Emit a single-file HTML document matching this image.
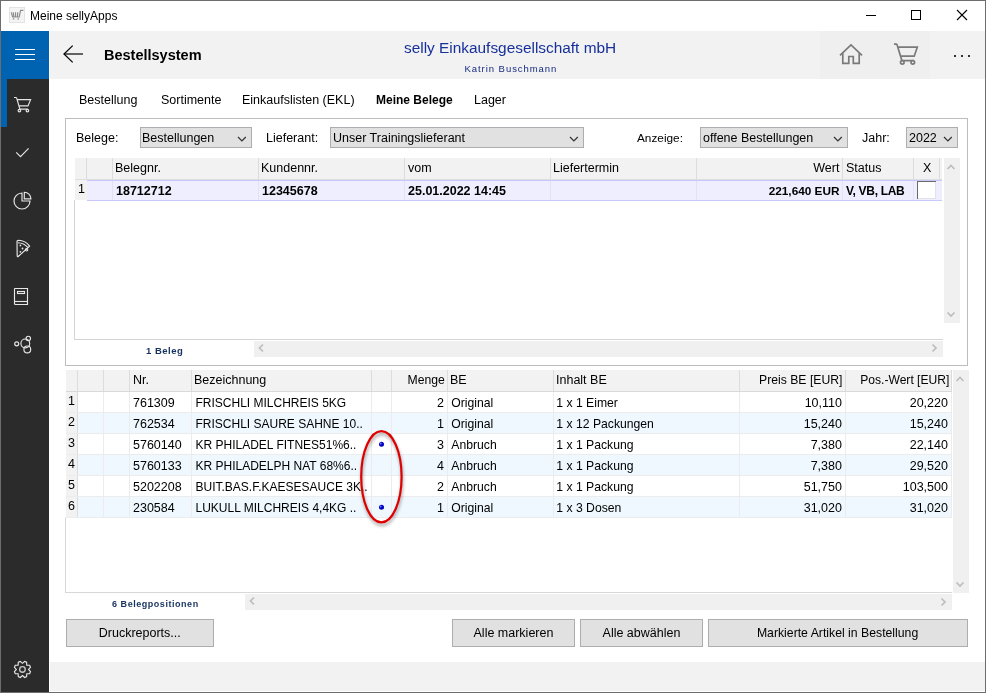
<!DOCTYPE html>
<html><head><meta charset="utf-8"><style>
html,body{margin:0;padding:0;background:#fff;}
#root{position:relative;will-change:transform;width:986px;height:693px;overflow:hidden;font-family:"Liberation Sans", sans-serif;}
#root>div,#root>svg{position:absolute;box-sizing:content-box;}
.t{white-space:pre;}
</style></head><body><div id="root">
<div style='left:0px;top:0px;width:986px;height:693px;background:#ffffff;'></div>
<div style='left:0px;top:0px;width:986px;height:1px;background:#6d6d6d;'></div>
<div style='left:0px;top:692px;width:986px;height:1px;background:#6d6d6d;'></div>
<div style='left:0px;top:0px;width:1px;height:693px;background:#6d6d6d;'></div>
<div style='left:985px;top:0px;width:1px;height:693px;background:#6d6d6d;'></div>
<div style='left:9px;top:7px;width:14px;height:14px;border:1px solid #e3e3e3;background:#f4f4f4;'></div>
<svg style='left:10px;top:8px;' width='15' height='14' viewBox='0 0 15 14'><g fill='none' stroke='#8c8c8c' stroke-width='1.2'><path d='M1.3 4.4 L2.6 9 L9.2 9 L10.6 2.4 L13.4 2.4'/><path d='M3.3 4.2 L3.8 9 M5.5 4.2 L5.6 9 M7.7 4.2 L7.5 9'/></g><path d='M2.5 11.5 L3.6 9.8 L4.7 11.5 Z M7.1 11.5 L8.2 9.8 L9.3 11.5 Z' fill='#8c8c8c'/></svg>
<div class='t' style='left:30.00px;top:10px;font-size:12px;line-height:12px;font-weight:400;color:#000;'>Meine sellyApps</div>
<div style='left:866px;top:15px;width:10px;height:1px;background:#000;'></div>
<div style='left:911px;top:10px;width:8px;height:8px;border:1px solid #000;background:transparent;'></div>
<svg style='left:956px;top:9px;' width='12' height='12' viewBox='0 0 12 12'><path d='M1 1 L11 11 M11 1 L1 11' stroke='#000' stroke-width='1.1' fill='none'/></svg>
<div style='left:1px;top:31px;width:48px;height:661px;background:#2b2b2b;'></div>
<div style='left:1px;top:31px;width:48px;height:48px;background:#0063b1;'></div>
<div style='left:49px;top:31px;width:1px;height:48px;background:#fbfbfb;'></div>
<div style='left:15px;top:49px;width:20px;height:1px;background:#ffffff;'></div>
<div style='left:15px;top:54px;width:20px;height:1px;background:#ffffff;'></div>
<div style='left:15px;top:59px;width:20px;height:1px;background:#ffffff;'></div>
<div style='left:1px;top:79px;width:6px;height:48px;background:#0063b1;'></div>
<div style='left:50px;top:31px;width:935px;height:48px;background:#f2f2f2;'></div>
<div style='left:820px;top:31px;width:110px;height:48px;background:#efefef;'></div>
<svg style='left:62px;top:44px;' width='22' height='20' viewBox='0 0 22 20'><path d='M21 10 L2.5 10' stroke='#333' stroke-width='1.5' fill='none'/><path d='M10.7 1.6 L2 10 L10.7 18.4' stroke='#0a0a0a' stroke-width='1.3' fill='none'/></svg>
<div class='t' style='left:104.00px;top:48px;font-size:14.5px;line-height:14.5px;font-weight:700;color:#000;'>Bestellsystem</div>
<div class='t' style='left:404.00px;top:40px;font-size:15.4px;line-height:15.4px;font-weight:400;color:#17309a;'>selly Einkaufsgesellschaft mbH</div>
<div class='t' style='left:464.50px;top:64px;font-size:9.5px;line-height:9.5px;font-weight:400;color:#152a80;letter-spacing:0.95px;'>Katrin Buschmann</div>
<div style='left:50px;top:662px;width:935px;height:29px;background:#f2f2f2;'></div>
<div class='t' style='left:79.00px;top:94px;font-size:12.5px;line-height:12.5px;font-weight:400;color:#000;'>Bestellung</div>
<div class='t' style='left:161.00px;top:94px;font-size:12.5px;line-height:12.5px;font-weight:400;color:#000;'>Sortimente</div>
<div class='t' style='left:242.00px;top:94px;font-size:12.5px;line-height:12.5px;font-weight:400;color:#000;'>Einkaufslisten (EKL)</div>
<div class='t' style='left:376.00px;top:94px;font-size:12px;line-height:12px;font-weight:700;color:#000;'>Meine Belege</div>
<div class='t' style='left:474.00px;top:94px;font-size:12.5px;line-height:12.5px;font-weight:400;color:#000;'>Lager</div>
<div style='left:65px;top:118px;width:901px;height:246px;border:1px solid #bdbdbd;background:transparent;'></div>
<div class='t' style='left:76.00px;top:132px;font-size:12.5px;line-height:12.5px;font-weight:400;color:#000;'>Belege:</div>
<div style='left:140px;top:127px;width:110px;height:19px;border:1px solid #acadb0;background:#e1e1e1;'></div>
<div class='t' style='left:142.00px;top:132px;font-size:12.5px;line-height:12.5px;font-weight:400;color:#000;'>Bestellungen</div>
<svg style='left:237px;top:136px;' width='10' height='7' viewBox='0 0 10 7'><path d='M1 1 L4.9 4.9 L8.8 1' stroke='#333' stroke-width='1.25' fill='none'/></svg>
<div class='t' style='left:266.00px;top:132px;font-size:12.5px;line-height:12.5px;font-weight:400;color:#000;'>Lieferant:</div>
<div style='left:330px;top:127px;width:252px;height:19px;border:1px solid #acadb0;background:#e1e1e1;'></div>
<div class='t' style='left:333.00px;top:132px;font-size:12.5px;line-height:12.5px;font-weight:400;color:#000;'>Unser Trainingslieferant</div>
<svg style='left:569px;top:136px;' width='10' height='7' viewBox='0 0 10 7'><path d='M1 1 L4.9 4.9 L8.8 1' stroke='#333' stroke-width='1.25' fill='none'/></svg>
<div class='t' style='left:637.00px;top:133px;font-size:11.8px;line-height:11.8px;font-weight:400;color:#000;'>Anzeige:</div>
<div style='left:700px;top:127px;width:146px;height:19px;border:1px solid #acadb0;background:#e1e1e1;'></div>
<div class='t' style='left:703.00px;top:132px;font-size:12.5px;line-height:12.5px;font-weight:400;color:#000;'>offene Bestellungen</div>
<svg style='left:833px;top:136px;' width='10' height='7' viewBox='0 0 10 7'><path d='M1 1 L4.9 4.9 L8.8 1' stroke='#333' stroke-width='1.25' fill='none'/></svg>
<div class='t' style='left:862.00px;top:132px;font-size:12.5px;line-height:12.5px;font-weight:400;color:#000;'>Jahr:</div>
<div style='left:906px;top:127px;width:50px;height:19px;border:1px solid #acadb0;background:#e1e1e1;'></div>
<div class='t' style='left:909.00px;top:132px;font-size:12.5px;line-height:12.5px;font-weight:400;color:#000;'>2022</div>
<svg style='left:943px;top:136px;' width='10' height='7' viewBox='0 0 10 7'><path d='M1 1 L4.9 4.9 L8.8 1' stroke='#333' stroke-width='1.25' fill='none'/></svg>
<div style='left:75px;top:158px;width:867px;height:22px;background:#f2f2f2;'></div>
<div style='left:75px;top:179px;width:867px;height:1px;background:#dedede;'></div>
<div style='left:86px;top:158px;width:1px;height:21px;background:#dcdcdc;'></div>
<div style='left:112px;top:158px;width:1px;height:21px;background:#dcdcdc;'></div>
<div style='left:258px;top:158px;width:1px;height:21px;background:#dcdcdc;'></div>
<div style='left:404px;top:158px;width:1px;height:21px;background:#dcdcdc;'></div>
<div style='left:550px;top:158px;width:1px;height:21px;background:#dcdcdc;'></div>
<div style='left:696px;top:158px;width:1px;height:21px;background:#dcdcdc;'></div>
<div style='left:842px;top:158px;width:1px;height:21px;background:#dcdcdc;'></div>
<div style='left:913px;top:158px;width:1px;height:21px;background:#dcdcdc;'></div>
<div style='left:939px;top:158px;width:1px;height:21px;background:#dcdcdc;'></div>
<div class='t' style='left:115.00px;top:162px;font-size:12.5px;line-height:12.5px;font-weight:400;color:#000;'>Belegnr.</div>
<div class='t' style='left:261.00px;top:162px;font-size:12.5px;line-height:12.5px;font-weight:400;color:#000;'>Kundennr.</div>
<div class='t' style='left:408.00px;top:162px;font-size:12.5px;line-height:12.5px;font-weight:400;color:#000;'>vom</div>
<div class='t' style='left:553.00px;top:162px;font-size:12.5px;line-height:12.5px;font-weight:400;color:#000;'>Liefertermin</div>
<div class='t' style='left:813.31px;top:162px;font-size:12.5px;line-height:12.5px;font-weight:400;color:#000;'>Wert</div>
<div class='t' style='left:846.00px;top:162px;font-size:12.5px;line-height:12.5px;font-weight:400;color:#000;'>Status</div>
<div class='t' style='left:923.00px;top:162px;font-size:12.5px;line-height:12.5px;font-weight:400;color:#000;'>X</div>
<div style='left:87px;top:180px;width:855px;height:21px;background:#eeeeff;'></div>
<div style='left:87px;top:180px;width:855px;height:1px;background:#c8c8fa;'></div>
<div style='left:87px;top:200px;width:855px;height:1px;background:#c8c8fa;'></div>
<div style='left:75px;top:180px;width:12px;height:20px;background:#f2f2f2;'></div>
<div style='left:112px;top:181px;width:1px;height:19px;background:#e2e2f4;'></div>
<div style='left:258px;top:181px;width:1px;height:19px;background:#e2e2f4;'></div>
<div style='left:404px;top:181px;width:1px;height:19px;background:#e2e2f4;'></div>
<div style='left:550px;top:181px;width:1px;height:19px;background:#e2e2f4;'></div>
<div style='left:696px;top:181px;width:1px;height:19px;background:#e2e2f4;'></div>
<div style='left:842px;top:181px;width:1px;height:19px;background:#e2e2f4;'></div>
<div style='left:913px;top:181px;width:1px;height:19px;background:#e2e2f4;'></div>
<div class='t' style='left:78.00px;top:183px;font-size:12.5px;line-height:12.5px;font-weight:400;color:#000;'>1</div>
<div class='t' style='left:116.00px;top:185px;font-size:12.5px;line-height:12.5px;font-weight:700;color:#000;'>18712712</div>
<div class='t' style='left:262.00px;top:185px;font-size:12.5px;line-height:12.5px;font-weight:700;color:#000;'>12345678</div>
<div class='t' style='left:408.00px;top:185px;font-size:12.5px;line-height:12.5px;font-weight:700;color:#000;'>25.01.2022 14:45</div>
<div class='t' style='left:768.69px;top:186px;font-size:11.8px;line-height:11.8px;font-weight:700;color:#000;'>221,640 EUR</div>
<div class='t' style='left:846.00px;top:185px;font-size:12px;line-height:12px;font-weight:700;color:#000;letter-spacing:-0.32px;'>V, VB, LAB</div>
<div style='left:917px;top:181px;width:19px;height:18px;background:#ffffff;'></div>
<div style='left:917px;top:181px;width:19px;height:1px;background:#6a6a6a;'></div>
<div style='left:917px;top:181px;width:1px;height:18px;background:#6a6a6a;'></div>
<div style='left:918px;top:198px;width:18px;height:1px;background:#e3e3e3;'></div>
<div style='left:935px;top:182px;width:1px;height:17px;background:#e3e3e3;'></div>
<div style='left:74px;top:200px;width:1px;height:140px;background:#d4d4d4;'></div>
<div style='left:74px;top:339px;width:869px;height:1px;background:#d4d4d4;'></div>
<div style='left:944px;top:158px;width:16px;height:165px;background:#f0f0f0;'></div>
<svg style='left:946px;top:163px;' width='10' height='8' viewBox='0 0 10 8'><path d='M1.5 6 L5 2.5 L8.5 6' stroke='#bdbdbd' stroke-width='1.7' fill='none'/></svg>
<svg style='left:946px;top:310px;' width='10' height='8' viewBox='0 0 10 8'><path d='M1.5 2.5 L5 6 L8.5 2.5' stroke='#bdbdbd' stroke-width='1.7' fill='none'/></svg>
<div style='left:254px;top:341px;width:689px;height:16px;background:#f0f0f0;'></div>
<svg style='left:257px;top:343px;' width='8' height='10' viewBox='0 0 8 10'><path d='M6 1.5 L2.5 5 L6 8.5' stroke='#bdbdbd' stroke-width='1.7' fill='none'/></svg>
<svg style='left:930px;top:343px;' width='8' height='10' viewBox='0 0 8 10'><path d='M2.5 1.5 L6 5 L2.5 8.5' stroke='#bdbdbd' stroke-width='1.7' fill='none'/></svg>
<div class='t' style='left:146.00px;top:346px;font-size:9.5px;line-height:9.5px;font-weight:700;color:#16325e;letter-spacing:0.5px;'>1 Beleg</div>
<div style='left:66px;top:370px;width:886px;height:21px;background:#f2f2f2;'></div>
<div style='left:66px;top:391px;width:886px;height:1px;background:#d9d9d9;'></div>
<div style='left:77px;top:370px;width:1px;height:21px;background:#dcdcdc;'></div>
<div style='left:103px;top:370px;width:1px;height:21px;background:#dcdcdc;'></div>
<div style='left:129px;top:370px;width:1px;height:21px;background:#dcdcdc;'></div>
<div style='left:191px;top:370px;width:1px;height:21px;background:#dcdcdc;'></div>
<div style='left:371px;top:370px;width:1px;height:21px;background:#dcdcdc;'></div>
<div style='left:391px;top:370px;width:1px;height:21px;background:#dcdcdc;'></div>
<div style='left:447px;top:370px;width:1px;height:21px;background:#dcdcdc;'></div>
<div style='left:553px;top:370px;width:1px;height:21px;background:#dcdcdc;'></div>
<div style='left:739px;top:370px;width:1px;height:21px;background:#dcdcdc;'></div>
<div style='left:845px;top:370px;width:1px;height:21px;background:#dcdcdc;'></div>
<div style='left:951px;top:370px;width:1px;height:21px;background:#dcdcdc;'></div>
<div class='t' style='left:133.00px;top:374px;font-size:12.5px;line-height:12.5px;font-weight:400;color:#000;'>Nr.</div>
<div class='t' style='left:194.00px;top:374px;font-size:12.5px;line-height:12.5px;font-weight:400;color:#000;'>Bezeichnung</div>
<div class='t' style='left:407.51px;top:374px;font-size:12.2px;line-height:12.2px;font-weight:400;color:#000;'>Menge</div>
<div class='t' style='left:450.00px;top:374px;font-size:12.5px;line-height:12.5px;font-weight:400;color:#000;'>BE</div>
<div class='t' style='left:556.00px;top:374px;font-size:12.5px;line-height:12.5px;font-weight:400;color:#000;'>Inhalt BE</div>
<div class='t' style='left:759.08px;top:374px;font-size:12.2px;line-height:12.2px;font-weight:400;color:#000;'>Preis BE [EUR]</div>
<div class='t' style='left:860.21px;top:374px;font-size:12.1px;line-height:12.1px;font-weight:400;color:#000;'>Pos.-Wert [EUR]</div>
<div style='left:78px;top:392px;width:874px;height:20px;background:#ffffff;'></div>
<div style='left:66px;top:392px;width:11px;height:20px;background:#f2f2f2;'></div>
<div style='left:66px;top:412px;width:886px;height:1px;background:#ececec;'></div>
<div style='left:77px;top:392px;width:1px;height:20px;background:#ececec;'></div>
<div style='left:103px;top:392px;width:1px;height:20px;background:#ececec;'></div>
<div style='left:129px;top:392px;width:1px;height:20px;background:#ececec;'></div>
<div style='left:191px;top:392px;width:1px;height:20px;background:#ececec;'></div>
<div style='left:371px;top:392px;width:1px;height:20px;background:#ececec;'></div>
<div style='left:391px;top:392px;width:1px;height:20px;background:#ececec;'></div>
<div style='left:447px;top:392px;width:1px;height:20px;background:#ececec;'></div>
<div style='left:553px;top:392px;width:1px;height:20px;background:#ececec;'></div>
<div style='left:739px;top:392px;width:1px;height:20px;background:#ececec;'></div>
<div style='left:845px;top:392px;width:1px;height:20px;background:#ececec;'></div>
<div style='left:951px;top:392px;width:1px;height:20px;background:#ececec;'></div>
<div style='left:77px;top:392px;width:1px;height:20px;background:#dcdcdc;'></div>
<div class='t' style='left:68.00px;top:395px;font-size:12.5px;line-height:12.5px;font-weight:400;color:#000;'>1</div>
<div class='t' style='left:133.00px;top:397px;font-size:12.5px;line-height:12.5px;font-weight:400;color:#000;'>761309</div>
<div class='t' style='left:195.50px;top:397px;font-size:12px;line-height:12px;font-weight:400;color:#000;'>FRISCHLI MILCHREIS 5KG</div>
<div class='t' style='left:437.00px;top:397px;font-size:12.5px;line-height:12.5px;font-weight:400;color:#000;'>2</div>
<div class='t' style='left:451.30px;top:397px;font-size:12.2px;line-height:12.2px;font-weight:400;color:#000;'>Original</div>
<div class='t' style='left:556.30px;top:397px;font-size:12.2px;line-height:12.2px;font-weight:400;color:#000;'>1 x 1 Eimer</div>
<div class='t' style='left:804.65px;top:397px;font-size:12.5px;line-height:12.5px;font-weight:400;color:#000;'>10,110</div>
<div class='t' style='left:909.72px;top:397px;font-size:12.5px;line-height:12.5px;font-weight:400;color:#000;'>20,220</div>
<div style='left:78px;top:413px;width:874px;height:20px;background:#eef8fe;'></div>
<div style='left:66px;top:413px;width:11px;height:20px;background:#f2f2f2;'></div>
<div style='left:66px;top:433px;width:886px;height:1px;background:#ececec;'></div>
<div style='left:77px;top:413px;width:1px;height:20px;background:#ececec;'></div>
<div style='left:103px;top:413px;width:1px;height:20px;background:#ececec;'></div>
<div style='left:129px;top:413px;width:1px;height:20px;background:#ececec;'></div>
<div style='left:191px;top:413px;width:1px;height:20px;background:#ececec;'></div>
<div style='left:371px;top:413px;width:1px;height:20px;background:#ececec;'></div>
<div style='left:391px;top:413px;width:1px;height:20px;background:#ececec;'></div>
<div style='left:447px;top:413px;width:1px;height:20px;background:#ececec;'></div>
<div style='left:553px;top:413px;width:1px;height:20px;background:#ececec;'></div>
<div style='left:739px;top:413px;width:1px;height:20px;background:#ececec;'></div>
<div style='left:845px;top:413px;width:1px;height:20px;background:#ececec;'></div>
<div style='left:951px;top:413px;width:1px;height:20px;background:#ececec;'></div>
<div style='left:77px;top:413px;width:1px;height:20px;background:#dcdcdc;'></div>
<div class='t' style='left:68.00px;top:416px;font-size:12.5px;line-height:12.5px;font-weight:400;color:#000;'>2</div>
<div class='t' style='left:133.00px;top:418px;font-size:12.5px;line-height:12.5px;font-weight:400;color:#000;'>762534</div>
<div class='t' style='left:195.50px;top:418px;font-size:12px;line-height:12px;font-weight:400;color:#000;'>FRISCHLI SAURE SAHNE 10..</div>
<div class='t' style='left:437.00px;top:418px;font-size:12.5px;line-height:12.5px;font-weight:400;color:#000;'>1</div>
<div class='t' style='left:451.30px;top:418px;font-size:12.2px;line-height:12.2px;font-weight:400;color:#000;'>Original</div>
<div class='t' style='left:556.30px;top:418px;font-size:12.2px;line-height:12.2px;font-weight:400;color:#000;'>1 x 12 Packungen</div>
<div class='t' style='left:803.72px;top:418px;font-size:12.5px;line-height:12.5px;font-weight:400;color:#000;'>15,240</div>
<div class='t' style='left:909.72px;top:418px;font-size:12.5px;line-height:12.5px;font-weight:400;color:#000;'>15,240</div>
<div style='left:78px;top:434px;width:874px;height:20px;background:#ffffff;'></div>
<div style='left:66px;top:434px;width:11px;height:20px;background:#f2f2f2;'></div>
<div style='left:66px;top:454px;width:886px;height:1px;background:#ececec;'></div>
<div style='left:77px;top:434px;width:1px;height:20px;background:#ececec;'></div>
<div style='left:103px;top:434px;width:1px;height:20px;background:#ececec;'></div>
<div style='left:129px;top:434px;width:1px;height:20px;background:#ececec;'></div>
<div style='left:191px;top:434px;width:1px;height:20px;background:#ececec;'></div>
<div style='left:371px;top:434px;width:1px;height:20px;background:#ececec;'></div>
<div style='left:391px;top:434px;width:1px;height:20px;background:#ececec;'></div>
<div style='left:447px;top:434px;width:1px;height:20px;background:#ececec;'></div>
<div style='left:553px;top:434px;width:1px;height:20px;background:#ececec;'></div>
<div style='left:739px;top:434px;width:1px;height:20px;background:#ececec;'></div>
<div style='left:845px;top:434px;width:1px;height:20px;background:#ececec;'></div>
<div style='left:951px;top:434px;width:1px;height:20px;background:#ececec;'></div>
<div style='left:77px;top:434px;width:1px;height:20px;background:#dcdcdc;'></div>
<div class='t' style='left:68.00px;top:437px;font-size:12.5px;line-height:12.5px;font-weight:400;color:#000;'>3</div>
<div class='t' style='left:133.00px;top:439px;font-size:12.5px;line-height:12.5px;font-weight:400;color:#000;'>5760140</div>
<div class='t' style='left:195.50px;top:439px;font-size:12px;line-height:12px;font-weight:400;color:#000;'>KR PHILADEL FITNES51%6..</div>
<div class='t' style='left:437.00px;top:439px;font-size:12.5px;line-height:12.5px;font-weight:400;color:#000;'>3</div>
<div class='t' style='left:451.30px;top:439px;font-size:12.2px;line-height:12.2px;font-weight:400;color:#000;'>Anbruch</div>
<div class='t' style='left:556.30px;top:439px;font-size:12.2px;line-height:12.2px;font-weight:400;color:#000;'>1 x 1 Packung</div>
<div class='t' style='left:810.67px;top:439px;font-size:12.5px;line-height:12.5px;font-weight:400;color:#000;'>7,380</div>
<div class='t' style='left:909.72px;top:439px;font-size:12.5px;line-height:12.5px;font-weight:400;color:#000;'>22,140</div>
<div style='left:78px;top:455px;width:874px;height:20px;background:#eef8fe;'></div>
<div style='left:66px;top:455px;width:11px;height:20px;background:#f2f2f2;'></div>
<div style='left:66px;top:475px;width:886px;height:1px;background:#ececec;'></div>
<div style='left:77px;top:455px;width:1px;height:20px;background:#ececec;'></div>
<div style='left:103px;top:455px;width:1px;height:20px;background:#ececec;'></div>
<div style='left:129px;top:455px;width:1px;height:20px;background:#ececec;'></div>
<div style='left:191px;top:455px;width:1px;height:20px;background:#ececec;'></div>
<div style='left:371px;top:455px;width:1px;height:20px;background:#ececec;'></div>
<div style='left:391px;top:455px;width:1px;height:20px;background:#ececec;'></div>
<div style='left:447px;top:455px;width:1px;height:20px;background:#ececec;'></div>
<div style='left:553px;top:455px;width:1px;height:20px;background:#ececec;'></div>
<div style='left:739px;top:455px;width:1px;height:20px;background:#ececec;'></div>
<div style='left:845px;top:455px;width:1px;height:20px;background:#ececec;'></div>
<div style='left:951px;top:455px;width:1px;height:20px;background:#ececec;'></div>
<div style='left:77px;top:455px;width:1px;height:20px;background:#dcdcdc;'></div>
<div class='t' style='left:68.00px;top:458px;font-size:12.5px;line-height:12.5px;font-weight:400;color:#000;'>4</div>
<div class='t' style='left:133.00px;top:460px;font-size:12.5px;line-height:12.5px;font-weight:400;color:#000;'>5760133</div>
<div class='t' style='left:195.50px;top:460px;font-size:12px;line-height:12px;font-weight:400;color:#000;'>KR PHILADELPH NAT 68%6..</div>
<div class='t' style='left:437.00px;top:460px;font-size:12.5px;line-height:12.5px;font-weight:400;color:#000;'>4</div>
<div class='t' style='left:451.30px;top:460px;font-size:12.2px;line-height:12.2px;font-weight:400;color:#000;'>Anbruch</div>
<div class='t' style='left:556.30px;top:460px;font-size:12.2px;line-height:12.2px;font-weight:400;color:#000;'>1 x 1 Packung</div>
<div class='t' style='left:810.67px;top:460px;font-size:12.5px;line-height:12.5px;font-weight:400;color:#000;'>7,380</div>
<div class='t' style='left:909.72px;top:460px;font-size:12.5px;line-height:12.5px;font-weight:400;color:#000;'>29,520</div>
<div style='left:78px;top:476px;width:874px;height:20px;background:#ffffff;'></div>
<div style='left:66px;top:476px;width:11px;height:20px;background:#f2f2f2;'></div>
<div style='left:66px;top:496px;width:886px;height:1px;background:#ececec;'></div>
<div style='left:77px;top:476px;width:1px;height:20px;background:#ececec;'></div>
<div style='left:103px;top:476px;width:1px;height:20px;background:#ececec;'></div>
<div style='left:129px;top:476px;width:1px;height:20px;background:#ececec;'></div>
<div style='left:191px;top:476px;width:1px;height:20px;background:#ececec;'></div>
<div style='left:371px;top:476px;width:1px;height:20px;background:#ececec;'></div>
<div style='left:391px;top:476px;width:1px;height:20px;background:#ececec;'></div>
<div style='left:447px;top:476px;width:1px;height:20px;background:#ececec;'></div>
<div style='left:553px;top:476px;width:1px;height:20px;background:#ececec;'></div>
<div style='left:739px;top:476px;width:1px;height:20px;background:#ececec;'></div>
<div style='left:845px;top:476px;width:1px;height:20px;background:#ececec;'></div>
<div style='left:951px;top:476px;width:1px;height:20px;background:#ececec;'></div>
<div style='left:77px;top:476px;width:1px;height:20px;background:#dcdcdc;'></div>
<div class='t' style='left:68.00px;top:479px;font-size:12.5px;line-height:12.5px;font-weight:400;color:#000;'>5</div>
<div class='t' style='left:133.00px;top:481px;font-size:12.5px;line-height:12.5px;font-weight:400;color:#000;'>5202208</div>
<div class='t' style='left:195.50px;top:481px;font-size:12px;line-height:12px;font-weight:400;color:#000;'>BUIT.BAS.F.KAESESAUCE 3K..</div>
<div class='t' style='left:437.00px;top:481px;font-size:12.5px;line-height:12.5px;font-weight:400;color:#000;'>2</div>
<div class='t' style='left:451.30px;top:481px;font-size:12.2px;line-height:12.2px;font-weight:400;color:#000;'>Anbruch</div>
<div class='t' style='left:556.30px;top:481px;font-size:12.2px;line-height:12.2px;font-weight:400;color:#000;'>1 x 1 Packung</div>
<div class='t' style='left:803.72px;top:481px;font-size:12.5px;line-height:12.5px;font-weight:400;color:#000;'>51,750</div>
<div class='t' style='left:902.77px;top:481px;font-size:12.5px;line-height:12.5px;font-weight:400;color:#000;'>103,500</div>
<div style='left:78px;top:497px;width:874px;height:20px;background:#eef8fe;'></div>
<div style='left:66px;top:497px;width:11px;height:20px;background:#f2f2f2;'></div>
<div style='left:65px;top:517px;width:887px;height:1px;background:#ececec;'></div>
<div style='left:77px;top:497px;width:1px;height:20px;background:#ececec;'></div>
<div style='left:103px;top:497px;width:1px;height:20px;background:#ececec;'></div>
<div style='left:129px;top:497px;width:1px;height:20px;background:#ececec;'></div>
<div style='left:191px;top:497px;width:1px;height:20px;background:#ececec;'></div>
<div style='left:371px;top:497px;width:1px;height:20px;background:#ececec;'></div>
<div style='left:391px;top:497px;width:1px;height:20px;background:#ececec;'></div>
<div style='left:447px;top:497px;width:1px;height:20px;background:#ececec;'></div>
<div style='left:553px;top:497px;width:1px;height:20px;background:#ececec;'></div>
<div style='left:739px;top:497px;width:1px;height:20px;background:#ececec;'></div>
<div style='left:845px;top:497px;width:1px;height:20px;background:#ececec;'></div>
<div style='left:951px;top:497px;width:1px;height:20px;background:#ececec;'></div>
<div style='left:77px;top:497px;width:1px;height:20px;background:#dcdcdc;'></div>
<div class='t' style='left:68.00px;top:500px;font-size:12.5px;line-height:12.5px;font-weight:400;color:#000;'>6</div>
<div class='t' style='left:133.00px;top:502px;font-size:12.5px;line-height:12.5px;font-weight:400;color:#000;'>230584</div>
<div class='t' style='left:195.50px;top:502px;font-size:12px;line-height:12px;font-weight:400;color:#000;'>LUKULL MILCHREIS 4,4KG ..</div>
<div class='t' style='left:437.00px;top:502px;font-size:12.5px;line-height:12.5px;font-weight:400;color:#000;'>1</div>
<div class='t' style='left:451.30px;top:502px;font-size:12.2px;line-height:12.2px;font-weight:400;color:#000;'>Original</div>
<div class='t' style='left:556.30px;top:502px;font-size:12.2px;line-height:12.2px;font-weight:400;color:#000;'>1 x 3 Dosen</div>
<div class='t' style='left:803.72px;top:502px;font-size:12.5px;line-height:12.5px;font-weight:400;color:#000;'>31,020</div>
<div class='t' style='left:909.72px;top:502px;font-size:12.5px;line-height:12.5px;font-weight:400;color:#000;'>31,020</div>
<div style='left:65px;top:518px;width:1px;height:75px;background:#d8d8d8;'></div>
<div style='left:65px;top:592px;width:887px;height:1px;background:#d8d8d8;'></div>
<div style='left:953px;top:370px;width:16px;height:223px;background:#f0f0f0;'></div>
<div style='left:245px;top:594px;width:707px;height:16px;background:#f0f0f0;'></div>
<svg style='left:955px;top:375px;' width='10' height='8' viewBox='0 0 10 8'><path d='M1.5 6 L5 2.5 L8.5 6' stroke='#bdbdbd' stroke-width='1.7' fill='none'/></svg>
<svg style='left:955px;top:580px;' width='10' height='8' viewBox='0 0 10 8'><path d='M1.5 2.5 L5 6 L8.5 2.5' stroke='#bdbdbd' stroke-width='1.7' fill='none'/></svg>
<svg style='left:248px;top:596px;' width='8' height='10' viewBox='0 0 8 10'><path d='M6 1.5 L2.5 5 L6 8.5' stroke='#bdbdbd' stroke-width='1.7' fill='none'/></svg>
<svg style='left:939px;top:597px;' width='8' height='10' viewBox='0 0 8 10'><path d='M2.5 1.5 L6 5 L2.5 8.5' stroke='#bdbdbd' stroke-width='1.7' fill='none'/></svg>
<div class='t' style='left:112.00px;top:600px;font-size:9px;line-height:9px;font-weight:700;color:#16325e;letter-spacing:0.54px;'>6 Belegpositionen</div>
<svg style='left:355px;top:425px;' width='55' height='110' viewBox='0 0 55 110'><defs><filter id='sh' x='-40%' y='-40%' width='180%' height='180%'><feGaussianBlur stdDeviation='1.8'/></filter></defs><ellipse cx='27' cy='54.5' rx='20.2' ry='45.6' fill='none' stroke='#000' stroke-opacity='0.28' stroke-width='3' filter='url(#sh)'/><ellipse cx='26.4' cy='51.75' rx='20.2' ry='45.6' fill='none' stroke='#e00000' stroke-width='2.2'/><circle cx='26.5' cy='19.3' r='2.5' fill='#0000c0'/><circle cx='26.5' cy='82.3' r='2.5' fill='#0000c0'/><circle cx='25.7' cy='18.5' r='0.9' fill='#7a7aff'/><circle cx='25.7' cy='81.5' r='0.9' fill='#7a7aff'/></svg>
<div style='left:66px;top:619px;width:146px;height:26px;border:1px solid #adadad;background:#e1e1e1;'></div>
<div class='t' style='left:98.75px;top:627px;font-size:12.5px;line-height:12.5px;font-weight:400;color:#000;'>Druckreports...</div>
<div style='left:452px;top:619px;width:121px;height:26px;border:1px solid #adadad;background:#e1e1e1;'></div>
<div class='t' style='left:473.53px;top:627px;font-size:12.5px;line-height:12.5px;font-weight:400;color:#000;'>Alle markieren</div>
<div style='left:580px;top:619px;width:121px;height:26px;border:1px solid #adadad;background:#e1e1e1;'></div>
<div class='t' style='left:602.56px;top:627px;font-size:12.5px;line-height:12.5px;font-weight:400;color:#000;'>Alle abwählen</div>
<div style='left:708px;top:619px;width:258px;height:26px;border:1px solid #adadad;background:#e1e1e1;'></div>
<div class='t' style='left:756.89px;top:627px;font-size:12.25px;line-height:12.25px;font-weight:400;color:#000;'>Markierte Artikel in Bestellung</div>
<svg style='left:12px;top:95px;' width='22' height='20' viewBox='0 0 22 20'><g fill='none' stroke='#e6e6e6' stroke-width='1.15'><path d='M2 2.5 L4 2.5 Q4.6 2.5 4.9 3.8 L7.9 14.1 L15.6 14.1 M4.9 4.6 L18.6 4.6 L16 10.9 L7.2 10.9'/><circle cx='7.4' cy='15.6' r='1.3'/><circle cx='15.4' cy='15.6' r='1.3'/></g></svg>
<svg style='left:12px;top:141px;' width='22' height='20' viewBox='0 0 22 20'><path fill='none' stroke='#e6e6e6' stroke-width='1.15' d='M4.2 11.4 L8.5 15.7 L16.6 7.4'/></svg>
<svg style='left:12px;top:188px;' width='22' height='22' viewBox='0 0 22 22'><g fill='none' stroke='#e6e6e6' stroke-width='1.15'><path d='M10 5 A8 8 0 1 0 18 13 L10 13 Z'/><path d='M12.3 4.2 A6.6 6.6 0 0 1 18.9 10.8 L12.3 10.8 Z'/></g></svg>
<svg style='left:12px;top:236px;' width='22' height='22' viewBox='0 0 22 22'><g fill='none' stroke='#e6e6e6' stroke-width='1.15'><path d='M5 5.3 Q5 4.3 6.5 4.3 Q13.5 4.6 17.6 10.2 L6.2 20.5 Q5.4 21 5.2 20 Z'/><path d='M5.8 6.8 Q12 7 16 11.6'/><circle cx='14.6' cy='13.8' r='1.2'/></g><g fill='#e6e6e6'><circle cx='8.4' cy='9.4' r='0.9'/><circle cx='10.5' cy='12.5' r='0.9'/><circle cx='8.4' cy='15.8' r='0.9'/></g></svg>
<svg style='left:12px;top:284px;' width='22' height='22' viewBox='0 0 22 22'><g fill='none' stroke='#e6e6e6' stroke-width='1.15'><path d='M3 4.5 L15.5 4.5 L15.5 20.5 L3.5 20.5 Q2.5 20.5 2.5 19.5 L2.5 5 Q2.5 4.5 3 4.5 Z'/><path d='M2.5 17.5 L15.5 17.5'/><rect x='5.5' y='7.5' width='7' height='2'/></g></svg>
<svg style='left:10px;top:332px;' width='26' height='22' viewBox='0 0 26 22'><g fill='none' stroke='#e6e6e6' stroke-width='1.15'><circle cx='6.7' cy='11.8' r='2'/><circle cx='15.3' cy='11.4' r='4.4'/><circle cx='18.3' cy='6.4' r='2.2'/><circle cx='17.3' cy='17.4' r='3.4'/></g></svg>
<svg style='left:11px;top:658px;' width='24' height='24' viewBox='0 0 24 24'><g fill='none' stroke='#e6e6e6' stroke-width='1.15'><path d='M11.45 5.35 L13.60 3.43 L15.60 4.26 L15.76 7.14 L18.64 7.30 L19.47 9.30 L17.55 11.45 L19.47 13.60 L18.64 15.60 L15.76 15.76 L15.60 18.64 L13.60 19.47 L11.45 17.55 L9.30 19.47 L7.30 18.64 L7.14 15.76 L4.26 15.60 L3.43 13.60 L5.35 11.45 L3.43 9.30 L4.26 7.30 L7.14 7.14 L7.30 4.26 L9.30 3.43 Z'/><circle cx='11.45' cy='11.45' r='2.8' stroke='#c8c8c8' stroke-width='1.3'/></g></svg>
<svg style='left:838px;top:42px;' width='26' height='24' viewBox='0 0 26 24'><path fill='none' stroke='#7a7a7a' stroke-width='1.7' d='M2 13.3 L13 3 L24 13.3 M4.8 11 L4.8 21.3 L10.8 21.3 L10.8 14.5 L15.3 14.5 L15.3 21.3 L21.2 21.3 L21.2 11'/></svg>
<svg style='left:892px;top:41px;' width='28' height='26' viewBox='0 0 28 26'><g fill='none' stroke='#7a7a7a' stroke-width='1.7'><path d='M2 3.2 L4.3 3.2 Q5 3.2 5.3 4.5 L9.9 19.6 L21.9 19.6 M5.5 6.2 L25.3 6.2 L22.2 15.2 L9.2 15.2'/><circle cx='10.3' cy='21.3' r='1.8'/><circle cx='20.8' cy='21.3' r='1.8'/></g></svg>
<div style='left:954px;top:55px;width:2px;height:2px;background:#333;'></div>
<div style='left:961px;top:55px;width:2px;height:2px;background:#333;'></div>
<div style='left:968px;top:55px;width:2px;height:2px;background:#333;'></div>
</div></body></html>
